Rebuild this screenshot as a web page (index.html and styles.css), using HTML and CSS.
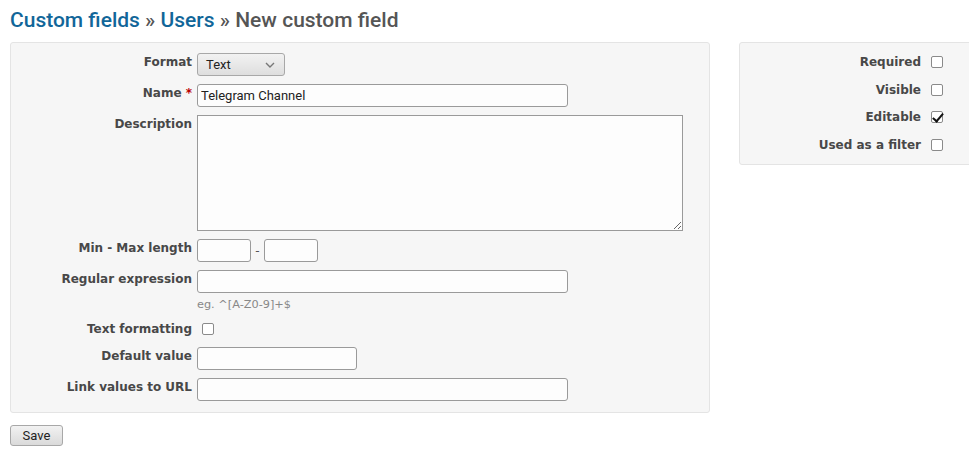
FILE: index.html
```html
<!DOCTYPE html>
<html>
<head>
<meta charset="utf-8">
<link rel="stylesheet" href="styles.css">
</head>
<body>
<div class="page">
  <h2 class="title"><a href="#">Custom fields</a> » <a href="#">Users</a> » New custom field</h2>
  <div class="columns">
    <div class="box main">
      <label class="lbl">Format</label>
      <div class="ctl">
        <div class="select"><span>Text</span>
          <svg width="10" height="6" viewBox="0 0 10 6"><path d="M1 1 L5 5 L9 1" fill="none" stroke="#777" stroke-width="1.4"/></svg>
        </div>
      </div>

      <label class="lbl">Name <span class="req">*</span></label>
      <div class="ctl"><input class="inp wide" type="text" value="Telegram Channel"></div>

      <label class="lbl">Description</label>
      <div class="ctl"><textarea class="area"></textarea></div>

      <label class="lbl">Min - Max length</label>
      <div class="ctl minmax"><input class="inp small" type="text"><span class="dash">-</span><input class="inp small" type="text"></div>

      <label class="lbl">Regular expression</label>
      <div class="ctl">
        <input class="inp wide" type="text">
        <div class="hint">eg. ^[A-Z0-9]+$</div>
      </div>

      <label class="lbl fmt">Text formatting</label>
      <div class="ctl fmt"><input class="cb" type="checkbox"></div>

      <label class="lbl">Default value</label>
      <div class="ctl"><input class="inp mid" type="text"></div>

      <label class="lbl">Link values to URL</label>
      <div class="ctl"><input class="inp wide" type="text"></div>
    </div>

    <div class="box side">
      <div class="srow"><label class="slbl">Required</label><input class="cb" type="checkbox"></div>
      <div class="srow"><label class="slbl">Visible</label><input class="cb" type="checkbox"></div>
      <div class="srow"><label class="slbl">Editable</label><input class="cb" type="checkbox" checked></div>
      <div class="srow"><label class="slbl">Used as a filter</label><input class="cb" type="checkbox"></div>
    </div>
  </div>
  <button class="btn">Save</button>
</div>
</body>
</html>
```

FILE: styles.css
```css
html, body {
  margin: 0;
  padding: 0;
  background: #fff;
  overflow: hidden;
}
body {
  font-family: "DejaVu Sans", Verdana, sans-serif;
  font-size: 12px;
  color: #333;
}
.page {
  padding: 0 0 0 10px;
  width: 959px;
  overflow: hidden;
}
.title {
  font-family: Roboto, "Open Sans", sans-serif;
  font-weight: 500;
  font-size: 21px;
  line-height: 24px;
  color: #555;
  margin: 0;
  padding: 8px 0 10px 0;
}
.title a {
  color: #169;
  text-decoration: none;
}
.columns {
  display: flex;
  align-items: flex-start;
  gap: 29px;
  width: 1500px;
}
.box {
  background: #f6f6f6;
  border: 1px solid #e4e4e4;
  border-radius: 3px;
}
.main {
  box-sizing: border-box;
  width: 700px;
  display: grid;
  grid-template-columns: 181px 1fr;
  column-gap: 5px;
  row-gap: 8px;
  padding: 10px 0 11px 0;
}
.lbl {
  text-align: right;
  font-weight: bold;
  color: #484848;
  line-height: 14px;
  padding-top: 2px;
}
.req {
  color: #bb0000;
}
.ctl {
  display: flex;
  flex-direction: column;
  align-items: flex-start;
}
.select {
  box-sizing: border-box;
  width: 88px;
  height: 23px;
  border: 1px solid #a8a8a8;
  border-radius: 3px;
  background: linear-gradient(#f2f2f2, #dedede);
  display: flex;
  align-items: center;
  justify-content: space-between;
  padding: 0 9px 0 8px;
  font-family: Roboto, "Open Sans", sans-serif;
  font-size: 13px;
  color: #222;
}
.inp {
  box-sizing: border-box;
  height: 23px;
  border: 1px solid #9a9a9a;
  border-radius: 3px;
  background: #fdfdfd;
  margin: 0;
  padding: 0 3px;
  font-family: Roboto, "Open Sans", sans-serif;
  font-size: 13px;
  color: #222;
  outline: none;
}
.wide { width: 371px; }
.mid { width: 160px; }
.small { width: 54px; }
.area {
  box-sizing: border-box;
  width: 486px;
  height: 116px;
  border: 1px solid #9a9a9a;
  border-radius: 0;
  background: #fdfdfd;
  margin: 0;
  resize: both;
  outline: none;
  display: block;
}
.minmax {
  flex-direction: row;
  align-items: center;
}
.dash {
  width: 13px;
  text-align: center;
  color: #555;
  font-size: 12px;
}
.hint {
  font-size: 11.3px;
  line-height: 14px;
  color: #888;
  margin-top: 5px;
}
.lbl.fmt {
  padding-top: 2px;
}
.ctl.fmt {
  padding-top: 3px;
  padding-left: 5px;
  margin-bottom: 4px;
}
.cb {
  appearance: none;
  -webkit-appearance: none;
  box-sizing: border-box;
  width: 12px;
  height: 12px;
  margin: 0;
  border: 1px solid #8a8a8a;
  border-radius: 2px;
  background: #fff;
  position: relative;
}
.cb:checked::after {
  content: "";
  position: absolute;
  left: 3px;
  top: -1px;
  width: 4px;
  height: 9px;
  border: solid #111;
  border-width: 0 2px 2px 0;
  transform: rotate(40deg);
}
.side {
  width: 700px;
  padding: 9px 0 9px 0;
  display: flex;
  flex-direction: column;
  gap: 7.6px;
}
.srow {
  display: flex;
  align-items: center;
  height: 20px;
}
.slbl {
  width: 181px;
  text-align: right;
  font-weight: bold;
  color: #484848;
  margin-right: 10px;
}
.btn {
  margin: 12px 0 0 0;
  box-sizing: border-box;
  width: 53px;
  height: 21px;
  border: 1px solid #a8a8a8;
  border-radius: 3px;
  background: linear-gradient(#f2f2f2, #dadada);
  font-family: Roboto, "Open Sans", sans-serif;
  font-size: 13px;
  color: #222;
  padding: 0;
}
```
